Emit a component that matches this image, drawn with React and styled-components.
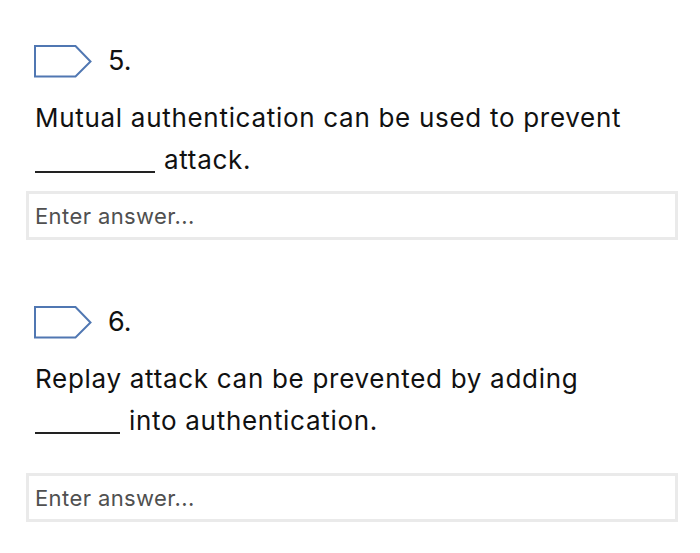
import React from 'react'
import styled, { createGlobalStyle } from 'styled-components'

const GlobalStyle = createGlobalStyle`
	html, body {
		margin: 0;
		padding: 0;
		background: #ffffff;
	}
	body {
		font-family: Inter, 'Noto Sans', 'Liberation Sans', sans-serif;
		color: #111111;
	}
`

// styles
const Page = styled.div`
	width: 700px;
	height: 553px;
	box-sizing: border-box;
	padding: 45px 22px 0 26px;
	display: flex;
	flex-direction: column;
`

const Question = styled.section`
	display: flex;
	flex-direction: column;
	margin-bottom: ${(p) => p.$gapAfter || 0}px;
`

const Header = styled.div`
	display: flex;
	align-items: center;
	gap: 16px;
	padding-left: 8px;
	height: 32px;
`

const Number = styled.span`
	font-size: 27px;
	line-height: 32px;
	color: #111111;
`

const Prompt = styled.p`
	margin: 20px 0 0 0;
	padding-left: 9px;
	font-size: 26px;
	line-height: 42px;
	letter-spacing: 0.7px;
	color: #111111;
`

const Blank = styled.span`
	display: inline-block;
	width: ${(p) => p.$width}px;
	height: 2px;
	background: #222222;
	vertical-align: -4px;
	margin-right: 9px;
`

const Answer = styled.input`
	display: block;
	box-sizing: border-box;
	width: 100%;
	height: 49px;
	margin-top: ${(p) => p.$top}px;
	padding: 0 6px;
	border: 3px solid #eaeaea;
	border-radius: 0;
	outline: none;
	background: #ffffff;
	font-family: Inter, 'Noto Sans', 'Liberation Sans', sans-serif;
	font-size: 22px;
	letter-spacing: 0.4px;
	color: #333333;

	&::placeholder {
		color: #505050;
		opacity: 1;
	}
`

const Flag = () => (
	<svg width='58' height='33' viewBox='0 0 58 33'>
		<path d='M1 1 H41.5 L56.5 16.5 L41.5 31.5 H1 Z' fill='none' stroke='#5077b2' strokeWidth='2' strokeLinejoin='miter' />
	</svg>
)

const questions = [
	{ num: '5.', line1: 'Mutual authentication can be used to prevent', blankWidth: 120, rest: 'attack.', inputTop: 10, gapAfter: 66 },
	{ num: '6.', line1: 'Replay attack can be prevented by adding', blankWidth: 85, rest: 'into authentication.', inputTop: 31, gapAfter: 0 },
]

const App = () => (
	<>
		<GlobalStyle />
		<Page>
			{questions.map((q) => (
				<Question key={q.num} $gapAfter={q.gapAfter}>
					<Header>
						<Flag />
						<Number>{q.num}</Number>
					</Header>
					<Prompt>
						{q.line1}
						<br />
						<Blank $width={q.blankWidth} />
						{q.rest}
					</Prompt>
					<Answer type='text' placeholder='Enter answer...' $top={q.inputTop} />
				</Question>
			))}
		</Page>
	</>
)

export default App
